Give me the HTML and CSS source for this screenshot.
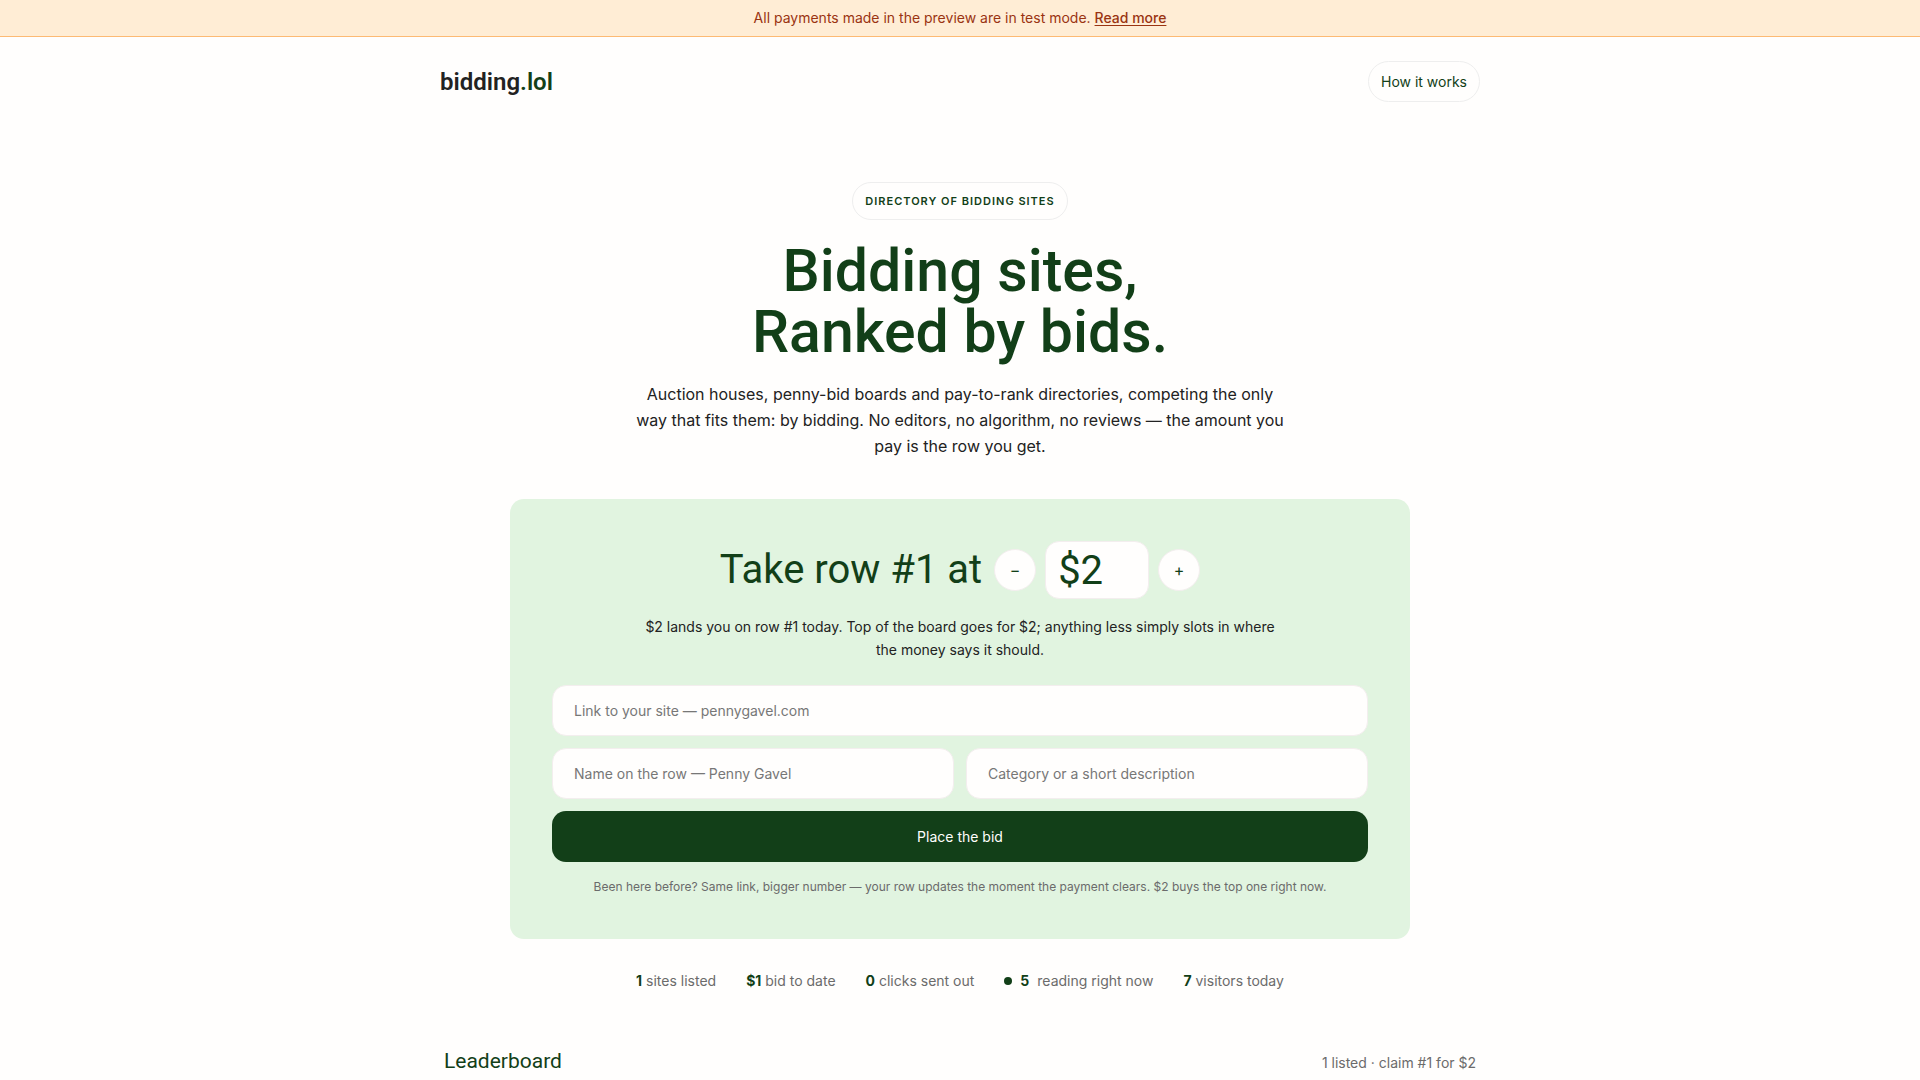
FILE: index.html
```
<!DOCTYPE html>
<html lang="en">
<head>
    <meta charset="UTF-8">
    <meta name="viewport" content="width=device-width, initial-scale=1.0">
    <title>bidding.lol</title>
    <link rel="stylesheet" href="styles.css">
</head>
<body>
    <div class="notice">
        All payments made in the preview are in test mode. <a href="#">Read more</a>
    </div>

    <header class="container header">
        <a class="logo" href="#">bidding<span>.lol</span></a>
        <a class="pill" href="#how">How it works</a>
    </header>

    <main class="container">
        <section class="hero">
            <p class="eyebrow">Directory of bidding sites</p>
            <h1>Bidding sites,<br>Ranked by bids.</h1>
            <p class="lead">Auction houses, penny-bid boards and pay-to-rank directories, competing the only way that fits them: by bidding. No editors, no algorithm, no reviews — the amount you pay is the row you get.</p>
        </section>

        <form id="bid-form" class="bid-card">
            <div class="bid-title">
                <label for="amount">Take row #1 at</label>
                <div class="stepper">
                    <button type="button" class="step" id="minus" aria-label="Lower the bid">−</button>
                    <input type="text" id="amount" name="amount" class="amount" value="$2">
                    <button type="button" class="step" id="plus" aria-label="Raise the bid">+</button>
                </div>
            </div>
            <p class="bid-text">$2 lands you on row #1 today. Top of the board goes for $2; anything less simply slots in where the money says it should.</p>
            <div class="fields">
                <input type="url" class="wide" name="link" aria-label="Link to your site" placeholder="Link to your site — pennygavel.com">
                <input type="text" name="name" aria-label="Name on the row" placeholder="Name on the row — Penny Gavel">
                <input type="text" name="category" aria-label="Category or a short description" placeholder="Category or a short description">
                <button type="submit" class="submit wide">Place the bid</button>
            </div>
            <p class="note">Been here before? Same link, bigger number — your row updates the moment the payment clears. $2 buys the top one right now.</p>
        </form>

        <ul class="stats">
            <li><strong>1</strong> sites listed</li>
            <li><strong>$1</strong> bid to date</li>
            <li><strong>0</strong> clicks sent out</li>
            <li class="live"><span class="dot"></span><strong>5</strong><span>reading right now</span></li>
            <li><strong>7</strong> visitors today</li>
        </ul>

        <section class="board-head">
            <h2>Leaderboard</h2>
            <p>1 listed · claim #1 for $2</p>
        </section>
    </main>

    <script>
        const amount = document.getElementById('amount');

        function changeBid(step) {
            const value = parseInt(amount.value.replace('$', '')) || 1;
            amount.value = `$${Math.max(1, value + step)}`;
        }

        document.getElementById('minus').addEventListener('click', () => changeBid(-1));
        document.getElementById('plus').addEventListener('click', () => changeBid(1));
        document.getElementById('bid-form').addEventListener('submit', (e) => e.preventDefault());
    </script>
</body>
</html>
```
FILE: styles.css
```
* {
    box-sizing: border-box;
}

body {
    margin: 0;
    font-family: Inter, "Liberation Sans", sans-serif;
    font-size: 14px;
    line-height: 20px;
    background-color: #fffefd;
    color: #222;
}

h1, h2, p, ul {
    margin: 0;
    padding: 0;
}

a {
    color: inherit;
}

input, button {
    font: inherit;
}

.notice {
    padding: 8px;
    text-align: center;
    background-color: #ffedd5;
    border-bottom: 1px solid #fdba74;
    color: #9a3412;
}

.notice a {
    font-weight: 500;
    text-underline-offset: 2px;
}

.container {
    width: 100%;
    max-width: 1080px;
    margin: 0 auto;
    padding: 0 20px;
}

.header {
    display: flex;
    justify-content: space-between;
    align-items: center;
    padding-top: 24px;
}

.logo, h1, h2, .bid-title {
    font-family: Roboto, "Liberation Sans", sans-serif;
    font-weight: 500;
    color: #123f18;
}

.logo {
    font-size: 24px;
    font-weight: 600;
    line-height: 32px;
    text-decoration: none;
    color: #222;
}

.logo span {
    color: #123f18;
}

.pill, .eyebrow {
    border: 1px solid #eee;
    color: #123f18;
}

.pill {
    padding: 10px 12px;
    border-radius: 24px;
    line-height: 19px;
    text-decoration: none;
}

.hero {
    display: flex;
    flex-direction: column;
    align-items: center;
    padding-top: 80px;
    text-align: center;
}

.eyebrow {
    padding: 8px 12px;
    border-radius: 20px;
    font-size: 11px;
    font-weight: 600;
    letter-spacing: 1px;
    text-transform: uppercase;
}

h1 {
    margin-top: 20px;
    font-size: 59px;
    line-height: 61px;
}

.lead {
    max-width: 656px;
    margin-top: 19px;
    font-size: 16px;
    line-height: 26px;
}

.bid-card {
    max-width: 900px;
    margin: 40px auto 0;
    padding: 42px;
    border-radius: 14px;
    background-color: #e1f4e0;
    text-align: center;
}

.bid-title {
    display: flex;
    flex-wrap: wrap;
    justify-content: center;
    align-items: center;
    gap: 12px;
    font-size: 40px;
    font-weight: 400;
    line-height: 48px;
}

.stepper {
    display: flex;
    align-items: center;
    gap: 9px;
}

.step {
    width: 42px;
    height: 42px;
    padding: 0;
    border: 1px solid #f3eeee;
    border-radius: 50%;
    background-color: #fffefd;
    color: #123f18;
    font-family: Inter, "Liberation Sans", sans-serif;
    font-size: 16px;
    line-height: 20px;
    cursor: pointer;
}

.amount {
    width: 104px;
    height: 58px;
    padding: 0 12px;
    border: 1px solid #f3eeee;
    border-radius: 14px;
    background-color: #fffefd;
    color: #123f18;
}

.bid-text {
    max-width: 640px;
    margin: 16px auto 0;
    line-height: 23px;
}

.fields {
    display: grid;
    grid-template-columns: 1fr 1fr;
    gap: 12px;
    margin-top: 24px;
}

.wide {
    grid-column: 1 / -1;
}

.fields input {
    width: 100%;
    height: 51px;
    padding: 0 21px;
    border: 1px solid #f3eeee;
    border-radius: 14px;
    background-color: #fffefd;
}

.fields input::placeholder {
    color: #777;
}

.submit {
    height: 51px;
    border: none;
    border-radius: 14px;
    background-color: #123f18;
    color: #fffefd;
    cursor: pointer;
}

.note {
    margin-top: 15px;
    font-size: 12px;
    color: #6b6b6b;
}

.stats {
    display: flex;
    flex-wrap: wrap;
    justify-content: center;
    gap: 12px 30px;
    margin-top: 32px;
    list-style: none;
    color: #6b6b6b;
}

.stats strong {
    color: #123f18;
}

.live {
    display: flex;
    align-items: center;
    gap: 8px;
}

.dot {
    width: 8px;
    height: 8px;
    border-radius: 50%;
    background-color: #123f18;
}

.board-head {
    display: flex;
    justify-content: space-between;
    align-items: baseline;
    margin-top: 56px;
    padding: 0 4px;
}

.board-head h2 {
    font-size: 21px;
    font-weight: 400;
    line-height: 28px;
}

.board-head p {
    color: #6b6b6b;
}
```
